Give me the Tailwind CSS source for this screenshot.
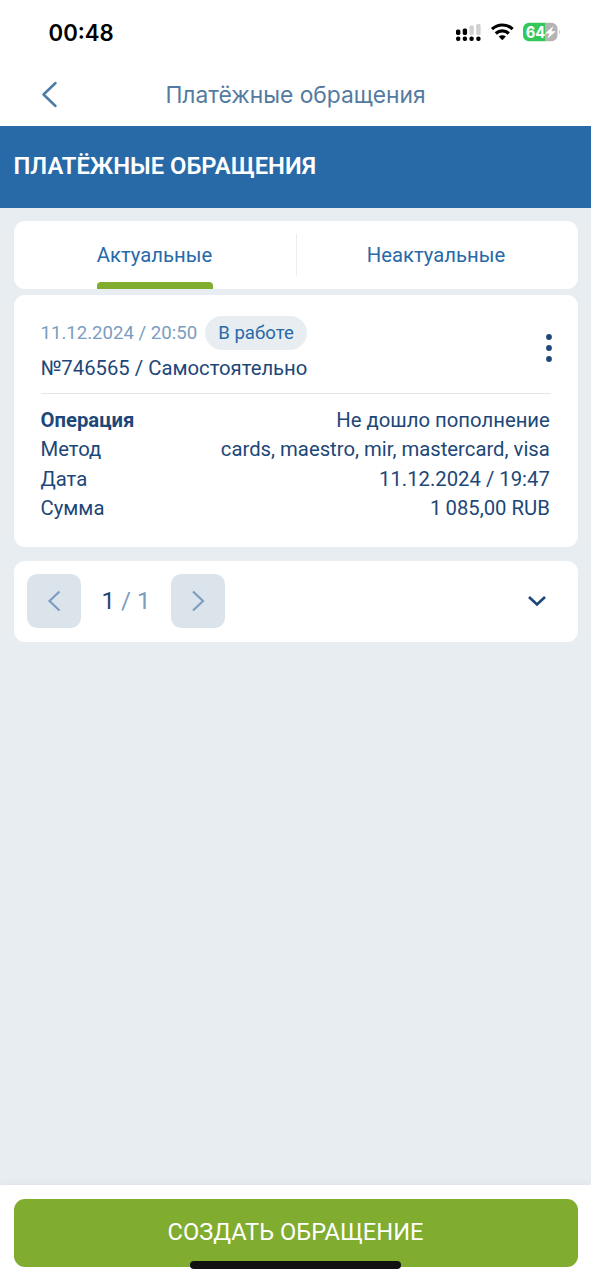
<!DOCTYPE html>
<html lang="ru">
<head>
<meta charset="utf-8">
<title>Платёжные обращения</title>
<script src="https://cdn.jsdelivr.net/npm/@tailwindcss/browser@4"></script>
</head>
<body class="font-['Roboto',sans-serif]">
<div class="relative flex h-[1280px] w-[591px] flex-col overflow-hidden bg-[#e8edf2] text-[#1d4778]">
  <div class="flex h-[64px] shrink-0 items-center bg-white pr-[31px] pl-[48.500px] text-black">
    <span class="pt-[2px] font-['Inter',sans-serif] text-[22.200px] leading-[28px] font-semibold">00:48</span>
    <svg class="ml-auto" width="104" height="20" viewBox="0 0 104 20">
      <g fill="#000"><rect x="0" y="7.500" width="4.400" height="5.400" rx="1.600"/><rect x="6.700" y="6.500" width="4.400" height="6.400" rx="1.600"/><rect x="0" y="14.500" width="4.400" height="4.600" rx="2"/><rect x="6.700" y="14.500" width="4.400" height="4.600" rx="2"/><rect x="13.400" y="14.500" width="4.400" height="4.600" rx="2"/><rect x="20.200" y="14.500" width="4.400" height="4.600" rx="2"/></g>
      <g fill="#d0d0d0"><rect x="13.400" y="3.500" width="4.400" height="9.400" rx="1.600"/><rect x="20.200" y="2" width="4.400" height="10.900" rx="1.600"/></g>
      <g fill="none" stroke="#000" stroke-width="3.200"><path d="M36 7.200a14.700 14.700 0 0 1 20.600 0"/><path d="M39.800 11.500a9.300 9.300 0 0 1 13 0"/></g>
      <path d="M42.700 14.600a5.200 5.200 0 0 1 7.200 0l-3.600 3.600z"/>
      <path fill="#34c759" d="M73 .8h16.500v18.400H73a6 6 0 0 1-6-6v-6.400a6 6 0 0 1 6-6z"/><path fill="#b4b4b4" d="M89 .8h6.500a6 6 0 0 1 6 6v6.400a6 6 0 0 1-6 6H89zM103 7.500q1.500 2.500 0 5z"/>
      <text x="69.700" y="15.900" textLength="19.600" lengthAdjust="spacingAndGlyphs" fill="#fff" font-family="Inter" font-size="16.500" font-weight="700">64</text>
      <path fill="#fff" d="M97.500 4l-8.500 7.500h4.500l-2.200 5.300 8.500-7.600h-4.500z"/>
    </svg>
  </div>
  <div class="grid h-[61.500px] shrink-0 grid-cols-[100px_1fr_100px] items-center bg-white">
    <svg class="mb-[1px] ml-[40px]" width="18" height="28" viewBox="0 0 18 28" fill="none" stroke="#4a7ca8" stroke-width="2.500" stroke-linecap="round" stroke-linejoin="round"><path d="M15.500 3L3.500 14.500L15.500 26"/></svg>
    <span class="pt-[1px] text-center font-['Inter',sans-serif] text-[22.800px] text-[#547b9f]">Платёжные обращения</span>
  </div>
  <div class="flex h-[82px] shrink-0 items-center bg-[#2869a8] pl-[13.500px] text-[23.800px] font-semibold text-white">ПЛАТЁЖНЫЕ ОБРАЩЕНИЯ</div>
  <div class="mx-[13.500px] mt-[13.500px] grid h-[68px] shrink-0 grid-cols-2 items-center rounded-[11px] bg-white text-center text-[20.250px] text-[#2869a8]">
    <div class="relative flex h-full items-center justify-center"><span>Актуальные</span><i class="absolute bottom-0 h-[7px] w-[116px] rounded-t-[4px] bg-[#80ac2f]"></i></div>
    <div class="flex h-[42px] items-center justify-center border-l border-[#e8edf2] pr-[2px]">Неактуальные</div>
  </div>
  <div class="mx-[13.500px] mt-[6px] flex h-[252px] shrink-0 flex-col rounded-[11px] bg-white px-[27px] pt-[21px] text-[20.300px]">
    <div class="flex h-[78px] justify-between border-b border-[#e3e7eb]">
      <div>
        <div class="flex items-center gap-[8px]"><span class="w-[156.500px] pt-[1.500px] text-[18.600px] whitespace-nowrap text-[#7b9dbf]">11.12.2024 / 20:50</span><span class="flex h-[34px] w-[102px] items-center justify-center rounded-full bg-[#e8edf2] pt-[1.500px] text-[18.600px] text-[#2869a8]">В работе</span></div>
        <div class="mt-[3px] leading-[30px]">№746565 / Самостоятельно</div>
      </div>
      <svg class="mt-[16.500px] mr-[-2px]" width="8" height="30" viewBox="0 0 8 30" fill="#1d4778"><circle cx="4" cy="4" r="2.900"/><circle cx="4" cy="15" r="2.900"/><circle cx="4" cy="26" r="2.900"/></svg>
    </div>
    <div class="mt-[11.500px] grid grid-cols-[auto_1fr] pr-[0.700px] leading-[29.500px]">
      <b>Операция</b><span class="text-right">Не дошло пополнение</span>
      <span>Метод</span><span class="text-right">cards, maestro, mir, mastercard, visa</span>
      <span>Дата</span><span class="text-right">11.12.2024 / 19:47</span>
      <span>Сумма</span><span class="text-right">1&#8201;085,00 RUB</span>
    </div>
  </div>
  <div class="mx-[13.500px] mt-[13.500px] flex h-[81px] shrink-0 items-center rounded-[11px] bg-white pr-[31px] pl-[13.500px] text-[24px]">
    <span class="flex h-[54px] w-[54px] items-center justify-center rounded-[10px] bg-[#dce4eb]"><svg width="14" height="22" viewBox="0 0 14 22" fill="none" stroke="#7b9dbf" stroke-width="2.200"><path d="M12.500 1.500L2.500 11L12.500 20.500"/></svg></span>
    <span class="w-[90px] pb-[1px] text-center text-[#7b9dbf]"><span class="text-[#1d4778]">1</span> / 1</span>
    <span class="flex h-[54px] w-[54px] items-center justify-center rounded-[10px] bg-[#dce4eb]"><svg width="14" height="22" viewBox="0 0 14 22" fill="none" stroke="#7b9dbf" stroke-width="2.200"><path d="M2 1.500L12 11L2 20.500"/></svg></span>
    <svg class="mb-[1px] ml-auto" width="20" height="12" viewBox="0 0 20 12" fill="none" stroke="#1d4778" stroke-width="2.700"><path d="M2 2L10 9.500L18 2"/></svg>
  </div>
  <div class="mt-auto h-[95px] shrink-0 bg-white px-[13.500px] pt-[13.500px] shadow-[0_-1px_8px_rgba(40,70,110,0.06)]">
    <div class="flex h-[68px] items-center justify-center rounded-[11px] bg-[#80ac2f] pt-[1px] text-[23.650px] text-white">СОЗДАТЬ ОБРАЩЕНИЕ</div>
  </div>
  <div class="absolute bottom-[11px] left-[190px] h-[8px] w-[211px] rounded-full bg-[#111]"></div>
</div>
</body>
</html>
